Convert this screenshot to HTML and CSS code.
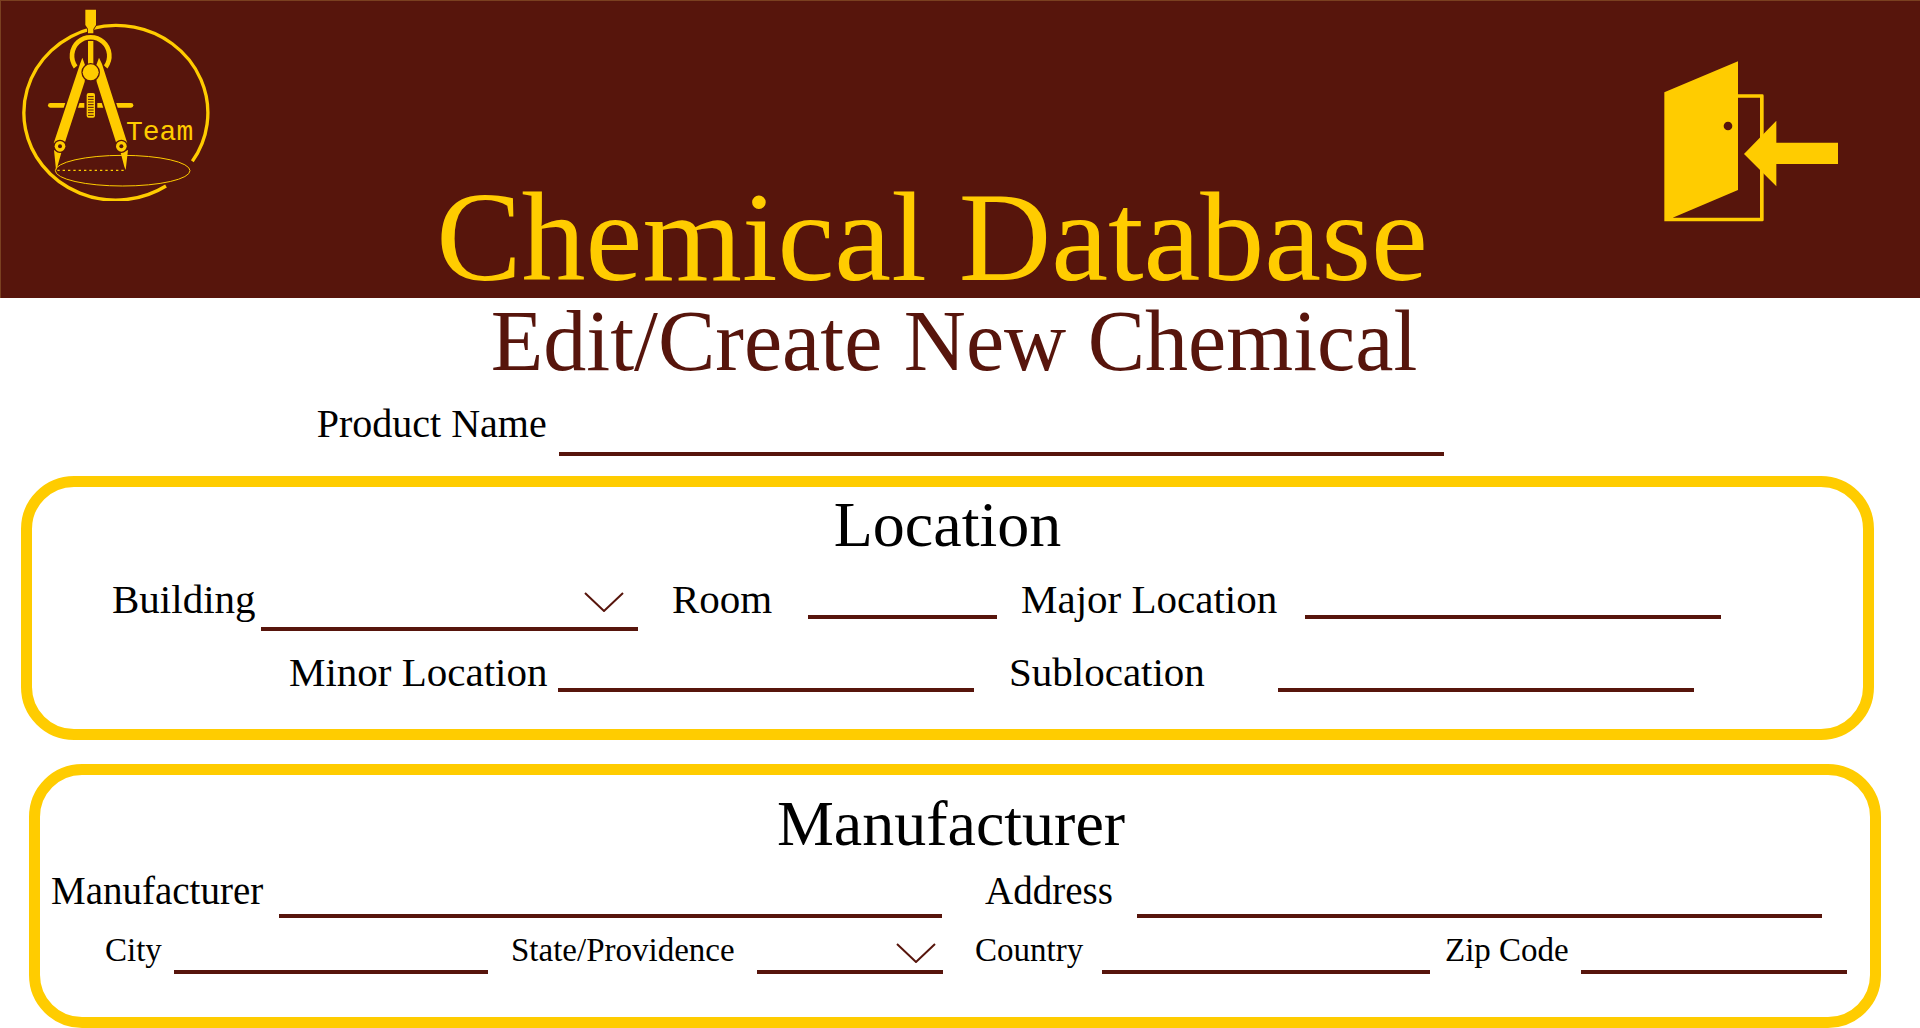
FILE: index.html
```html
<!DOCTYPE html>
<html lang="en">
<head>
<meta charset="utf-8">
<meta name="viewport" content="width=device-width, initial-scale=1">
<title>Chemical Database</title>
<link rel="stylesheet" href="styles.css">
</head>
<body>
<header class="banner">
  <svg class="logo" viewBox="66 24 564 579" role="img" aria-label="A Team">
    <path class="line" stroke-width="10" d="M577 484A276 262 0 1 0 498 558"/>
    <ellipse class="line" stroke-width="3" cx="368" cy="512" rx="202" ry="46"/>
    <path class="line" stroke-width="4" stroke-dasharray="7 9" d="M172 511H376"/>
    <path class="line" stroke-width="14" d="M227 201A56 56 0 1 1 317 201"/>
    <path class="cut" stroke-width="5" d="M256 29h32v46l-8 12v13h-16v-13l-8-12z"/>
    <path class="fill" d="M264 123h16v75h-16z"/>
    <path class="line" stroke-width="14" stroke-linecap="round" d="M151 316H393"/>
    <path class="cut" stroke-width="10" d="M247 173l11 30-4 42-60 185h-33l79-238zM297 173l-11 30 4 42 59 185h33l-76-238z"/>
    <circle class="cut" stroke-width="8" cx="272" cy="217" r="24"/>
    <rect class="cut" stroke-width="14" x="260" y="279" width="25" height="74" rx="6"/>
    <path class="groove" stroke-width="3" d="M264 290h17M264 298h17M264 306h17M264 314h17M264 322h17M264 330h17M264 338h17M264 346h17"/>
    <path class="fill" d="M162 450l22 8-12 42-4 10zM384 450l-22 8 11 42 4 10z"/>
    <circle class="cut" stroke-width="8" cx="180" cy="439" r="16"/>
    <circle class="cut" stroke-width="8" cx="364" cy="439" r="16"/>
    <circle class="hole" cx="180" cy="439" r="6"/>
    <circle class="hole" cx="364" cy="439" r="6"/>
    <text class="logo-text" x="378" y="421">Team</text>
  </svg>
  <h1 class="title">Chemical Database</h1>
  <button class="exit" type="button" aria-label="Exit">
    <svg class="exit-icon" viewBox="72 62 522 483" aria-hidden="true">
      <path class="fill" d="M73 156L294 63V449L98 532H360V172H290V162H367q4 0 4 4V539q0 4-4 4H73z"/>
      <circle class="hole" cx="264" cy="257" r="13"/>
      <path class="fill" d="M312 341L409 241V307H594V371H409V438z"/>
    </svg>
  </button>
</header>

<main>
  <h2 class="subtitle">Edit/Create New Chemical</h2>
  <form>
    <div class="product">
      <div class="field field-product">
        <label for="product">Product Name</label>
        <input id="product" type="text">
      </div>
    </div>

    <section class="panel panel-location">
      <h3>Location</h3>
      <div class="row row-site">
        <div class="field field-building">
          <label for="building">Building</label>
          <div class="picker">
            <select id="building"><option value=""></option></select>
            <svg class="chevron" viewBox="0 0 40 20" aria-hidden="true"><path d="M1 1L20 19L39 1"/></svg>
          </div>
        </div>
        <div class="field field-room">
          <label for="room">Room</label>
          <input id="room" type="text">
        </div>
        <div class="field field-major">
          <label for="major">Major Location</label>
          <input id="major" type="text">
        </div>
      </div>
      <div class="row row-spot">
        <div class="field field-spot">
          <label for="minor">Minor Location</label>
          <input id="minor" type="text">
        </div>
        <div class="field field-spot">
          <label for="sub">Sublocation</label>
          <input id="sub" type="text">
        </div>
      </div>
    </section>

    <section class="panel panel-manufacturer">
      <h3>Manufacturer</h3>
      <div class="row row-maker">
        <div class="field field-maker">
          <label for="maker">Manufacturer</label>
          <input id="maker" type="text">
        </div>
        <div class="field field-address">
          <label for="address">Address</label>
          <input id="address" type="text">
        </div>
      </div>
      <div class="row row-region">
        <div class="field field-city">
          <label for="city">City</label>
          <input id="city" type="text">
        </div>
        <div class="field field-state">
          <label for="state">State/Providence</label>
          <div class="picker">
            <select id="state"><option value=""></option></select>
            <svg class="chevron" viewBox="0 0 40 20" aria-hidden="true"><path d="M1 1L20 19L39 1"/></svg>
          </div>
        </div>
        <div class="field field-country">
          <label for="country">Country</label>
          <input id="country" type="text">
        </div>
        <div class="field field-zip">
          <label for="zip">Zip Code</label>
          <input id="zip" type="text">
        </div>
      </div>
    </section>
  </form>
</main>
</body>
</html>
```
FILE: styles.css
```css
:root {
  --maroon: #57150c;
  --gold: #ffcc00;
}

* {
  box-sizing: border-box;
}

body {
  margin: 0;
  background: #fff;
  color: #000;
  font-family: "Liberation Serif", "Times New Roman", serif;
}

h1, h2, h3 {
  margin: 0;
  font-weight: 400;
  text-align: center;
}

/* Banner */
.banner {
  display: flex;
  align-items: flex-start;
  min-height: 298px;
  padding: 7px 72px 1px 21px;
  border: 1px solid #7a4020;
  border-width: 1px 0 0 1px;
  background: var(--maroon);
}

.logo {
  flex: none;
  width: 188px;
  height: 193px;
}

.title {
  flex: 1;
  align-self: flex-end;
  color: var(--gold);
  font-size: 128px;
  line-height: 120px;
}

.exit {
  flex: none;
  margin: 43px 0 0;
  padding: 10px;
  border: 0;
  background: none;
  cursor: pointer;
}

.exit-icon {
  display: block;
  width: 174px;
  height: 161px;
}

.fill, .cut, .logo-text {
  fill: var(--gold);
}

.cut, .groove {
  stroke: var(--maroon);
  paint-order: stroke;
}

.hole {
  fill: var(--maroon);
}

.line {
  fill: none;
  stroke: var(--gold);
}

.logo-text {
  font-family: "Liberation Mono", "Courier New", monospace;
  font-size: 84px;
}

/* Form */
.subtitle {
  padding-right: 12px;
  color: var(--maroon);
  font-size: 86px;
  line-height: 86px;
}

.product {
  margin: 20px 0;
  padding: 0 24.8% 0 16.5%;
  font-size: 40px;
}

.row {
  display: flex;
}

.field {
  display: grid;
  grid-template-columns: var(--label) minmax(0, 1fr);
  align-items: start;
  flex-basis: 0;
  min-width: 0;
}

label {
  line-height: 40px;
  white-space: nowrap;
}

input, select {
  display: block;
  width: 100%;
  height: 40px;
  margin: 0;
  padding: 0 4px;
  border: 0;
  border-bottom: 4px solid var(--maroon);
  border-radius: 0;
  outline: 0;
  background: transparent;
  color: inherit;
  font: inherit;
}

select {
  appearance: none;
}

.picker {
  position: relative;
}

.chevron {
  position: absolute;
  right: 14px;
  bottom: 19px;
  width: 40px;
  height: 20px;
  fill: none;
  stroke: var(--maroon);
  stroke-width: 2;
  pointer-events: none;
}

.panel {
  border: 11px solid var(--gold);
  border-radius: 53px;
}

.panel h3 {
  font-size: 64px;
  line-height: 64px;
}

.field-product {
  --label: 242px;
}

.field-product input, .field-building select {
  height: 52px;
}

/* Location */
.panel-location {
  margin: 0 46px 24px 21px;
  padding: 6px 0 37px;
  font-size: 41px;
}

.row-site {
  margin-top: 22px;
  padding: 0 142px 0 80px;
}

.field-building {
  --label: 149px;
  flex-grow: 526;
}

.field-room {
  --label: 136px;
  flex-grow: 325;
  margin-left: 34px;
}

.field-major {
  --label: 284px;
  flex-grow: 700;
  margin-left: 24px;
}

.row-spot {
  gap: 35px;
  margin-top: 21px;
  padding: 0 169px 0 257px;
}

.field-spot {
  --label: 269px;
  flex-grow: 1;
}

/* Manufacturer */
.panel-manufacturer {
  margin: 0 39px 0 29px;
  padding: 17px 0 43px;
}

.panel-manufacturer h3 {
  padding-right: 8px;
}

.row-maker {
  gap: 43px;
  margin-top: 15px;
  padding: 0 48px 0 11px;
  font-size: 39px;
}

.row-maker input {
  height: 47px;
}

.field-maker {
  --label: 228px;
  flex-grow: 891;
}

.field-address {
  --label: 152px;
  flex-grow: 837;
}

.row-region {
  margin-top: 15px;
  padding: 0 23px 0 65px;
  font-size: 33px;
}

.row-region label {
  line-height: 34px;
}

.row-region input, .row-region select {
  height: 41px;
}

.row-region .chevron {
  right: 7px;
  bottom: 11px;
}

.field-city {
  --label: 69px;
  flex-grow: 383;
}

.field-state {
  --label: 246px;
  flex-grow: 432;
  margin-left: 23px;
}

.field-country {
  --label: 127px;
  flex-grow: 455;
  margin-left: 32px;
}

.field-zip {
  --label: 136px;
  flex-grow: 402;
  margin-left: 15px;
}
```
